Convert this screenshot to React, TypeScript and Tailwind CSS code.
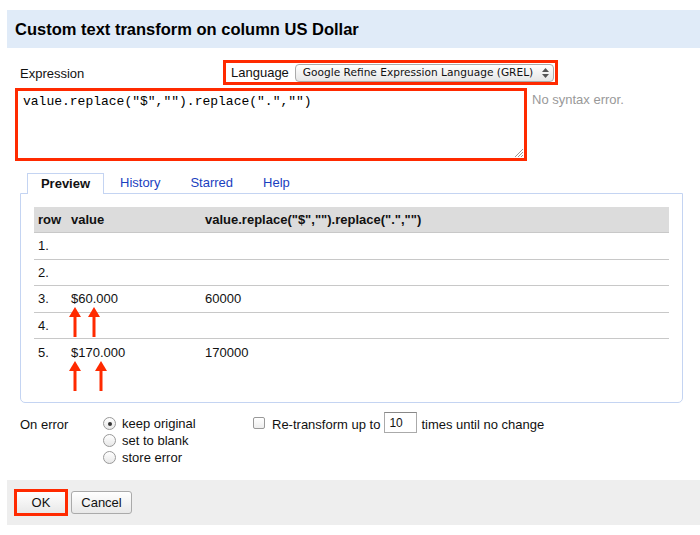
import React, { useState } from "react";

const rows = [
  { n: "1.", v: "", r: "" },
  { n: "2.", v: "", r: "" },
  { n: "3.", v: "$60.000", r: "60000" },
  { n: "4.", v: "", r: "" },
  { n: "5.", v: "$170.000", r: "170000" },
];

function Arrow({ x, y, h }: { x: number; y: number; h: number }) {
  return (
    <svg className="absolute" style={{ left: x - 6, top: y }} width="12" height={h} viewBox={`0 0 12 ${h}`}>
      <polygon points={`6,0 12,10 0,10`} fill="#ff2a00" />
      <rect x="4.5" y="9" width="3" height={h - 9} fill="#ff2a00" />
    </svg>
  );
}

export default function App() {
  const [onError, setOnError] = useState("keep");
  const tabs = ["Preview", "History", "Starred", "Help"];

  return (
    <div className="w-[700px] h-[535px] bg-white pt-[10px] pl-[7px] text-[13px] text-[#111]" style={{ fontFamily: '"Liberation Sans", Arial, sans-serif' }}>
      <div className="bg-white h-[515px] flex flex-col">
        {/* header */}
        <div className="h-[38px] bg-[#e0ebf8] flex items-center pl-2">
          <h1 className="text-[16.5px] font-bold text-black">Custom text transform on column US Dollar</h1>
        </div>

        <div className="relative flex-1">
          {/* expression row */}
          <div className="flex items-start mt-[12px]">
            <div className="ml-[13px] mt-[4px] w-[203px]">Expression</div>
            <div className="border-[3px] border-[#ff2a00] w-[335px] h-[25px] flex items-center pl-[5px]">
              <span className="mr-[6px]">Language</span>
              <div className="flex-1 h-[18px] mr-[1px] rounded-[4px] border border-[#aaa] bg-gradient-to-b from-white to-[#e6e6e6] flex items-center justify-between pl-[7px] pr-[4px] text-[10.6px] whitespace-nowrap" style={{ fontFamily: '"DejaVu Sans", sans-serif' }}>
                <span>Google Refine Expression Language (GREL)</span>
                <svg width="7" height="10" viewBox="0 0 7 10">
                  <polygon points="3.5,0 7,4 0,4" fill="#555" />
                  <polygon points="0,6 7,6 3.5,10" fill="#555" />
                </svg>
              </div>
            </div>
          </div>

          <div className="flex items-start mt-[3px]">
            <div className="ml-[8px] w-[512px] h-[73px] border-[3px] border-[#ff2a00] bg-white relative">
              <div className="px-[5px] pt-[1px] text-[13px] text-black" style={{ fontFamily: '"Liberation Mono", "Courier New", monospace' }}>
                value.replace("$","").replace(".","")
              </div>
              <svg className="absolute right-[1px] bottom-[1px]" width="9" height="9" viewBox="0 0 9 9">
                <line x1="1" y1="9" x2="9" y2="1" stroke="#999" strokeWidth="1" />
                <line x1="4" y1="9" x2="9" y2="4" stroke="#999" strokeWidth="1" />
                <line x1="7" y1="9" x2="9" y2="7" stroke="#999" strokeWidth="1" />
              </svg>
            </div>
            <div className="ml-[5px] mt-[2px] text-[#999]">No syntax error.</div>
          </div>

          {/* tabs */}
          <div className="ml-[13px] mt-[12px] w-[663px]">
            <div className="flex h-[20px] pl-[7px] items-end">
              {tabs.map((t, i) =>
                i === 0 ? (
                  <div key={t} className="w-[77px] h-[21px] -mb-px border border-b-0 border-[#c4d4f2] bg-white flex items-center justify-center font-bold relative z-10">
                    {t}
                  </div>
                ) : (
                  <div key={t} className="h-[20px] flex items-center text-[#1a3fbf] ml-[16px] mr-[14px]">
                    {t}
                  </div>
                )
              )}
            </div>
            <div className="border border-[#c4d4f2] rounded-b-[5px] h-[210px] pt-[13px] px-[13px] relative">
              <div className="relative">
                <div className="flex h-[26px] bg-[#dcdcdc] border-b border-[#c8c8c8] items-center font-bold">
                  <div className="w-[37px] pl-[4px]">row</div>
                  <div className="w-[134px]">value</div>
                  <div>value.replace("$","").replace(".","")</div>
                </div>
                {rows.map((r, i) => (
                  <div key={r.n} className={`flex h-[26.5px] items-center ${i < rows.length - 1 ? "border-b border-[#c8c8c8]" : ""}`}>
                    <div className="w-[37px] pl-[4px]">{r.n}</div>
                    <div className="w-[134px]">{r.v}</div>
                    <div>{r.r}</div>
                  </div>
                ))}
                <Arrow x={41} y={100} h={30} />
                <Arrow x={60} y={100} h={30} />
                <Arrow x={41} y={154} h={30} />
                <Arrow x={67} y={154} h={30} />
              </div>
            </div>
          </div>

          {/* on error */}
          <div className="flex mt-[12px] ml-[13px]">
            <div className="w-[83px]">On error</div>
            <div className="flex flex-col w-[150px]">
              {[
                ["keep", "keep original"],
                ["blank", "set to blank"],
                ["store", "store error"],
              ].map(([k, label]) => (
                <label key={k} className="flex items-center h-[17px]" onClick={() => setOnError(k)}>
                  <span className="w-[13px] h-[13px] rounded-full border border-[#999] bg-gradient-to-b from-white to-[#e8e8e8] flex items-center justify-center mr-[6px]">
                    {onError === k && <span className="w-[4px] h-[4px] rounded-full bg-[#333]" />}
                  </span>
                  {label}
                </label>
              ))}
            </div>
            <div className="flex items-start">
              <span className="w-[12px] h-[12px] mt-[2px] rounded-[2px] border border-[#999] bg-gradient-to-b from-white to-[#eee] mr-[7px]" />
              <span>Re-transform up to</span>
              <div className="ml-[4px] -mt-[3px] w-[33px] h-[21px] border border-[#aaa] border-t-[#888] flex items-center pl-[4px] text-[12px]">10</div>
              <span className="ml-[4px]">times until no change</span>
            </div>
          </div>
        </div>

        {/* footer */}
        <div className="h-[45px] bg-[#eeeeee] flex items-center pl-[7px] gap-[1px]">
          <div className="border-[3px] border-[#ff2a00] w-[54px] h-[27px] flex">
            <button className="flex-1 bg-gradient-to-b from-white to-[#e8e8e8] text-[13px]">OK</button>
          </div>
          <button className="ml-[2px] w-[61px] h-[23px] border border-[#aaa] rounded-[3px] bg-gradient-to-b from-white to-[#e8e8e8] text-[13px]">Cancel</button>
        </div>
      </div>
    </div>
  );
}
